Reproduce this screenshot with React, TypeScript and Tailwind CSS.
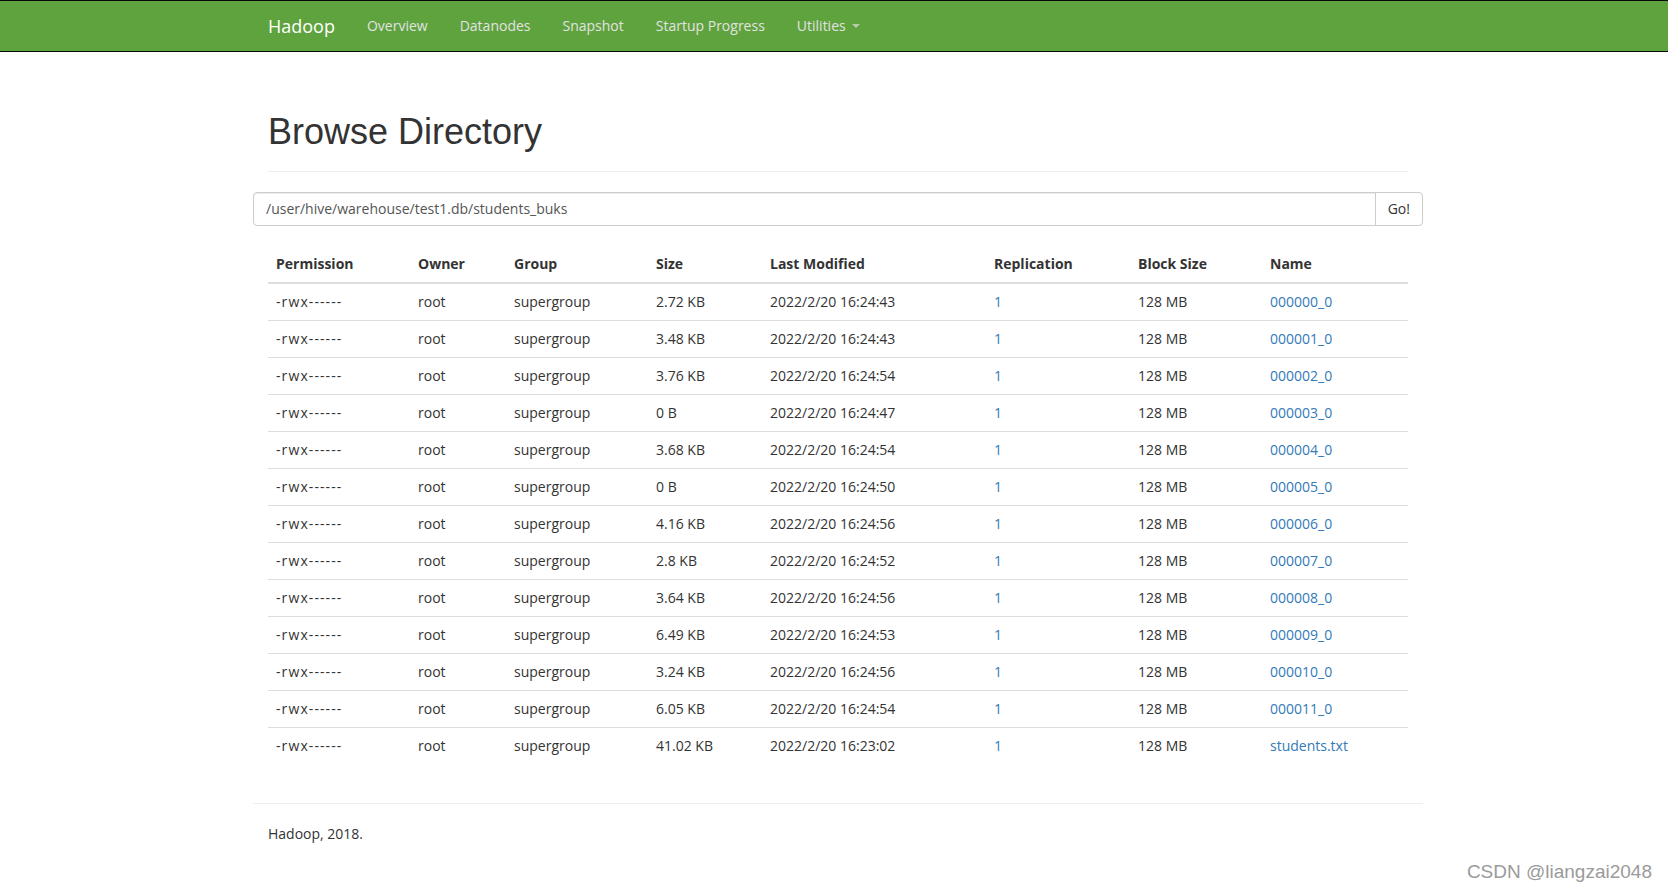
import React from 'react';

// --- данные каталога ---
const files = [
  { size: '2.72 KB', time: '16:24:43', name: '000000_0' },
  { size: '3.48 KB', time: '16:24:43', name: '000001_0' },
  { size: '3.76 KB', time: '16:24:54', name: '000002_0' },
  { size: '0 B', time: '16:24:47', name: '000003_0' },
  { size: '3.68 KB', time: '16:24:54', name: '000004_0' },
  { size: '0 B', time: '16:24:50', name: '000005_0' },
  { size: '4.16 KB', time: '16:24:56', name: '000006_0' },
  { size: '2.8 KB', time: '16:24:52', name: '000007_0' },
  { size: '3.64 KB', time: '16:24:56', name: '000008_0' },
  { size: '6.49 KB', time: '16:24:53', name: '000009_0' },
  { size: '3.24 KB', time: '16:24:56', name: '000010_0' },
  { size: '6.05 KB', time: '16:24:54', name: '000011_0' },
  { size: '41.02 KB', time: '16:23:02', name: 'students.txt' },
];

const columns = [
  { label: 'Permission', w: 'w-[142px]' },
  { label: 'Owner', w: 'w-[96px]' },
  { label: 'Group', w: 'w-[142px]' },
  { label: 'Size', w: 'w-[114px]' },
  { label: 'Last Modified', w: 'w-[224px]' },
  { label: 'Replication', w: 'w-[144px]' },
  { label: 'Block Size', w: 'w-[132px]' },
  { label: 'Name', w: 'w-[146px]' },
];

const navLinks = ['Overview', 'Datanodes', 'Snapshot', 'Startup Progress'];

export default function App() {
  return (
    <div className="relative min-h-screen bg-white font-['Open_Sans',sans-serif] text-[14px] leading-[20px] text-[#333]">
      {/* Навбар */}
      <header className="h-[52px] border-y border-[#080808] bg-[#5fa33e]">
        <div className="ml-[253px] w-[1170px] px-[15px]">
          <nav className="flex h-[50px] items-center">
            <a className="-ml-[15px] pl-[15px] pr-[16px] py-[15px] text-[18px] leading-[20px] text-white">Hadoop</a>
            {navLinks.map((l) => (
              <a key={l} className="px-[16px] py-[15px] text-[#e2e2e2]">
                {l}
              </a>
            ))}
            <a className="flex items-center px-[16px] py-[15px] text-[#e2e2e2]">
              Utilities
              <span className="ml-[6px] h-0 w-0 border-x-[4px] border-t-[4px] border-x-transparent border-t-[#dddddd] opacity-70" />
            </a>
          </nav>
        </div>
      </header>

      <div className="ml-[253px] w-[1170px] px-[15px]">
        {/* Заголовок */}
        <div className="mt-[60px] border-b border-[#eeeeee] pb-[19px]">
          <h1 className="font-['Liberation_Sans',Arial,sans-serif] text-[36px] leading-[39.6px] font-normal text-[#333]">
            Browse Directory
          </h1>
        </div>

        {/* Путь */}
        <div className="-mx-[15px] mt-[20px] flex h-[34px]">
          <input
            defaultValue="/user/hive/warehouse/test1.db/students_buks"
            className="h-[34px] flex-1 rounded-l-[4px] border border-[#cccccc] px-[12px] text-[14px] text-[#555] shadow-[inset_0_1px_1px_rgba(0,0,0,0.075)] outline-none"
          />
          <button className="-ml-px h-[34px] rounded-r-[4px] border border-[#cccccc] bg-white px-[12px] text-[14px] text-[#333]">
            Go!
          </button>
        </div>

        {/* Таблица */}
        <table className="mt-[20px] w-full table-fixed border-collapse text-left">
          <thead>
            <tr>
              {columns.map((c) => (
                <th key={c.label} className={`${c.w} border-b-2 border-[#dddddd] p-[8px] align-bottom font-bold`}>
                  {c.label}
                </th>
              ))}
            </tr>
          </thead>
          <tbody>
            {files.map((f) => (
              <tr key={f.name}>
                <td className="border-t border-[#dddddd] p-[8px] tracking-[1.1px]">-rwx------</td>
                <td className="border-t border-[#dddddd] p-[8px]">root</td>
                <td className="border-t border-[#dddddd] p-[8px]">supergroup</td>
                <td className="border-t border-[#dddddd] p-[8px]">{f.size}</td>
                <td className="border-t border-[#dddddd] p-[8px]">2022/2/20 {f.time}</td>
                <td className="border-t border-[#dddddd] p-[8px] text-[#337ab7]">1</td>
                <td className="border-t border-[#dddddd] p-[8px]">128 MB</td>
                <td className="border-t border-[#dddddd] p-[8px]">
                  <a className="text-[#337ab7]">{f.name}</a>
                </td>
              </tr>
            ))}
          </tbody>
        </table>

        {/* Футер */}
        <hr className="-mx-[15px] mt-[39px] mb-[20px] border-t border-[#eeeeee]" />
        <p>Hadoop, 2018.</p>
      </div>

      {/* водяной знак */}
      <div className="absolute right-[16px] bottom-[10px] font-['Liberation_Sans',Arial,sans-serif] text-[19px] leading-[22px] text-[#9a9a9a] [text-shadow:0_0_1px_#ffffff]">
        CSDN @liangzai2048
      </div>
    </div>
  );
}
